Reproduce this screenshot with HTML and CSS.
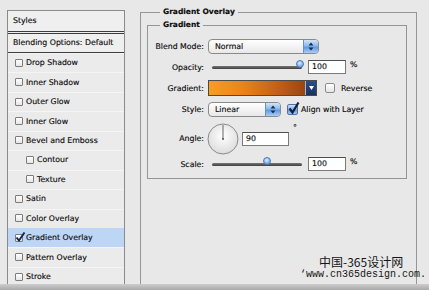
FILE: index.html
```html
<!doctype html>
<html>
 <head>
  <title>Layer Style - Gradient Overlay</title>
  <link rel="stylesheet" href="styles.css">
 </head>
 <body>
  <div class="window">
   <div class="styles-panel">
    <div class="styles-head">Styles</div>
    <div class="blend-default">Blending Options: Default</div>
    <ul class="style-list">
     <li><span class="box"></span>Drop Shadow</li>
     <li><span class="box"></span>Inner Shadow</li>
     <li><span class="box"></span>Outer Glow</li>
     <li><span class="box"></span>Inner Glow</li>
     <li><span class="box"></span>Bevel and Emboss</li>
     <li class="sub"><span class="box"></span>Contour</li>
     <li class="sub"><span class="box"></span>Texture</li>
     <li><span class="box"></span>Satin</li>
     <li><span class="box"></span>Color Overlay</li>
     <li class="selected"><span class="box checked"><svg width="11" height="11" viewBox="0 0 11 11"><path d="M1.5 5.5 L4 8.5 L9.5 0.5" fill="none" stroke="#14254a" stroke-width="1.9"/></svg></span>Gradient Overlay</li>
     <li><span class="box"></span>Pattern Overlay</li>
     <li><span class="box"></span>Stroke</li>
    </ul>
   </div>

   <fieldset class="group outer">
    <legend>Gradient Overlay</legend>
    <fieldset class="group inner">
     <legend>Gradient</legend>
     <div class="form-grid">
      <label>Blend Mode:</label>
      <div class="ctrl">
       <div class="popup wide"><span class="value">Normal</span><span class="stepper"><svg width="6" height="9" viewBox="0 0 6 9"><path d="M3 0.5 L5.5 3.5 L0.5 3.5 Z M3 8.5 L5.5 5.5 L0.5 5.5 Z" fill="#1c2c48"/></svg></span></div>
      </div>

      <label>Opacity:</label>
      <div class="ctrl">
       <div class="slider"><span class="knob" style="left: 98%"></span></div>
       <div class="num">100</div>
       <span class="unit">%</span>
      </div>

      <label>Gradient:</label>
      <div class="ctrl">
       <div class="gradient-pick"><span class="swatch"></span><span class="pick-btn"><svg width="5" height="4" viewBox="0 0 5 4"><path d="M0 0 L5 0 L2.5 4 Z" fill="#fff"/></svg></span></div>
       <span class="check"></span>
       <span class="check-label">Reverse</span>
      </div>

      <label>Style:</label>
      <div class="ctrl">
       <div class="popup narrow"><span class="value">Linear</span><span class="stepper"><svg width="6" height="9" viewBox="0 0 6 9"><path d="M3 0.5 L5.5 3.5 L0.5 3.5 Z M3 8.5 L5.5 5.5 L0.5 5.5 Z" fill="#1c2c48"/></svg></span></div>
       <span class="check on"><svg width="13" height="13" viewBox="0 0 13 13"><path d="M2.5 6.5 L5.5 10.5 L11.5 0.5" fill="none" stroke="#13213f" stroke-width="2.2"/></svg></span>
       <span class="check-label tight">Align with Layer</span>
      </div>

      <label>Angle:</label>
      <div class="ctrl">
       <svg class="dial" width="32" height="32" viewBox="0 0 32 32">
        <defs>
         <radialGradient id="dialFill" cx="50%" cy="40%" r="60%">
          <stop offset="0" stop-color="#ffffff"/>
          <stop offset="1" stop-color="#dcdcdc"/>
         </radialGradient>
        </defs>
        <circle cx="16" cy="16" r="15" fill="url(#dialFill)" stroke="#8a8a8a" stroke-width="1"/>
        <line x1="16" y1="16" x2="16" y2="2" stroke="#666" stroke-width="1"/>
        <circle cx="16" cy="16" r="1" fill="#555"/>
       </svg>
       <div class="num angle">90</div>
       <span class="unit">°</span>
      </div>

      <label>Scale:</label>
      <div class="ctrl">
       <div class="slider"><span class="knob" style="left: 61%"></span></div>
       <div class="num">100</div>
       <span class="unit">%</span>
      </div>
     </div>
    </fieldset>
   </fieldset>
  </div>
  <div class="bottom-bar"></div>

  <div class="watermark">
   <div class="wm-cn">中国-365设计网</div>
   <div class="wm-url">‘www.cn365design.com.</div>
  </div>
 </body>
</html>
```

FILE: styles.css
```css
body {
  margin: 0;
  height: 290px;
  overflow: hidden;
  position: relative;
  background-color: #e8e8e8;
  color: #0c0c0c;
  font-family: "DejaVu Sans", Verdana, sans-serif;
  font-size: 7.8px;
  -webkit-text-stroke: 0.15px #0c0c0c;
}

.window {
  display: flex;
  gap: 15px;
  height: 277px;
  padding: 7px 0 0 7px;
}

/* left column: list of layer styles */

.styles-panel {
  width: 118px;
  margin-top: 3px;
  box-sizing: border-box;
  border: 1px solid #8a8a8a;
  border-bottom: none;
  background-color: #ebebeb;
}

.styles-head {
  height: 20px;
  line-height: 20px;
  padding-left: 5px;
  background-color: #efefef;
  border-bottom: 3px double #3c3c3c;
}

.blend-default {
  height: 18px;
  line-height: 18px;
  padding-left: 5px;
  background-color: #efefef;
  border-bottom: 1px solid #3c3c3c;
}

.style-list {
  list-style: none;
  margin: 0;
  padding: 0;
}

.style-list li {
  display: flex;
  align-items: center;
  height: 19.45px;
  padding-left: 7px;
  box-shadow: inset 0 1px 0 #f5f5f5;
}

.style-list li.sub {
  padding-left: 18px;
}

.style-list li.selected {
  background-color: #bed6f6;
  box-shadow: none;
}

.box {
  position: relative;
  width: 8px;
  height: 8px;
  margin-right: 3px;
  box-sizing: border-box;
  border: 1px solid #7c7c7c;
  border-radius: 1px;
  background: linear-gradient(#fff, #e6e6e6);
}

.box.checked svg {
  position: absolute;
  left: -1px;
  top: -3px;
}

/* right column: group boxes */

.group {
  margin: 0;
  min-width: 0;
  border: 1px solid #959595;
}

.group legend {
  padding: 0 3px;
  line-height: 10px;
  font-weight: bold;
  font-size: 7.5px;
}

.group.outer {
  width: 277px;
  box-sizing: border-box;
  padding: 3px 9px 0 6px;
  border-bottom: none;
}

.group.outer legend {
  margin-left: 13px;
}

.group.inner {
  padding: 8px 0 4px 0;
}

.group.inner legend {
  margin-left: 12px;
}

.form-grid {
  display: grid;
  grid-template-columns: 56px 1fr;
  grid-template-rows: 16px 26px 16px 27px 31px 20px;
  column-gap: 4px;
  align-items: center;
}

.form-grid label {
  text-align: right;
}

.ctrl {
  display: flex;
  align-items: center;
}

.popup {
  display: flex;
  align-items: center;
  height: 15px;
  box-sizing: border-box;
  padding-left: 6px;
  border: 1px solid #8a8a8a;
  border-radius: 4px;
  background: linear-gradient(#ffffff, #e8e8e8);
  overflow: hidden;
}

.popup.wide {
  width: 111px;
}

.popup.narrow {
  width: 73px;
}

.popup .value {
  flex: 1;
}

.stepper {
  display: flex;
  align-items: center;
  justify-content: center;
  align-self: stretch;
  width: 14px;
  border-left: 1px solid #6d8fbe;
  background: linear-gradient(#d2e4f9, #8bbaee 45%, #5e9ae2 55%, #a9cdf5);
}

.slider {
  position: relative;
  width: 90px;
  height: 3px;
  margin-left: 4px;
  border-radius: 2px;
  background: linear-gradient(#777, #3e3e3e);
}

.knob {
  position: absolute;
  top: -6px;
  width: 8px;
  height: 8px;
  margin-left: -4px;
  box-sizing: border-box;
  border: 1px solid #4a78b4;
  border-radius: 50%;
  background: radial-gradient(circle at 45% 35%, #e3efff, #7fb0ec 60%, #5a8fd6);
}

.num {
  width: 38px;
  height: 14px;
  margin-left: 6px;
  box-sizing: border-box;
  padding-left: 3px;
  line-height: 12px;
  border: 1px solid #7a7a7a;
  border-top-color: #4f4f4f;
  background-color: #fff;
}

.num.angle {
  width: 47px;
  margin-left: 3px;
}

.unit {
  align-self: flex-start;
  margin-left: 4px;
  line-height: 9px;
}

.gradient-pick {
  display: flex;
  width: 109px;
  height: 16px;
  box-sizing: border-box;
  border: 1px solid #4a4a4a;
}

.swatch {
  flex: 1;
  background: linear-gradient(to right, #f79d26, #ea8419 35%, #c2621a 70%, #9c4411);
}

.pick-btn {
  display: flex;
  align-items: center;
  justify-content: center;
  width: 10px;
  border-left: 1px solid #9fb7da;
  background: linear-gradient(#2b4f8a, #17325f);
}

.check {
  width: 10px;
  height: 10px;
  margin-left: 8px;
  box-sizing: border-box;
  border: 1px solid #8c8c8c;
  border-radius: 2px;
  background: linear-gradient(#fff, #e4e4e4);
}

.check.on {
  position: relative;
  width: 11px;
  height: 11px;
  margin-left: 6px;
  border-color: #4f74a8;
  background: linear-gradient(#cfe2f9, #79acea 50%, #5c98e0 51%, #9fc7f4);
}

.check.on svg {
  position: absolute;
  left: -1px;
  top: -3px;
}

.check-label {
  margin-left: 6px;
}

.check-label.tight {
  margin-left: 3px;
}

.dial {
  margin-left: -1px;
}

.bottom-bar {
  height: 6px;
  background: linear-gradient(#cdcdcd, #a9a9a9);
}

/* site watermark stamped over the screenshot */

.watermark {
  position: absolute;
  left: 300px;
  top: 254px;
  color: #161616;
  -webkit-text-stroke: 0;
}

.wm-cn {
  margin-left: 19px;
  font-family: "Noto Sans CJK SC", sans-serif;
  font-size: 12px;
  line-height: 15px;
}

.wm-url {
  font-family: "Liberation Mono", monospace;
  font-size: 10px;
  line-height: 11px;
}
```
